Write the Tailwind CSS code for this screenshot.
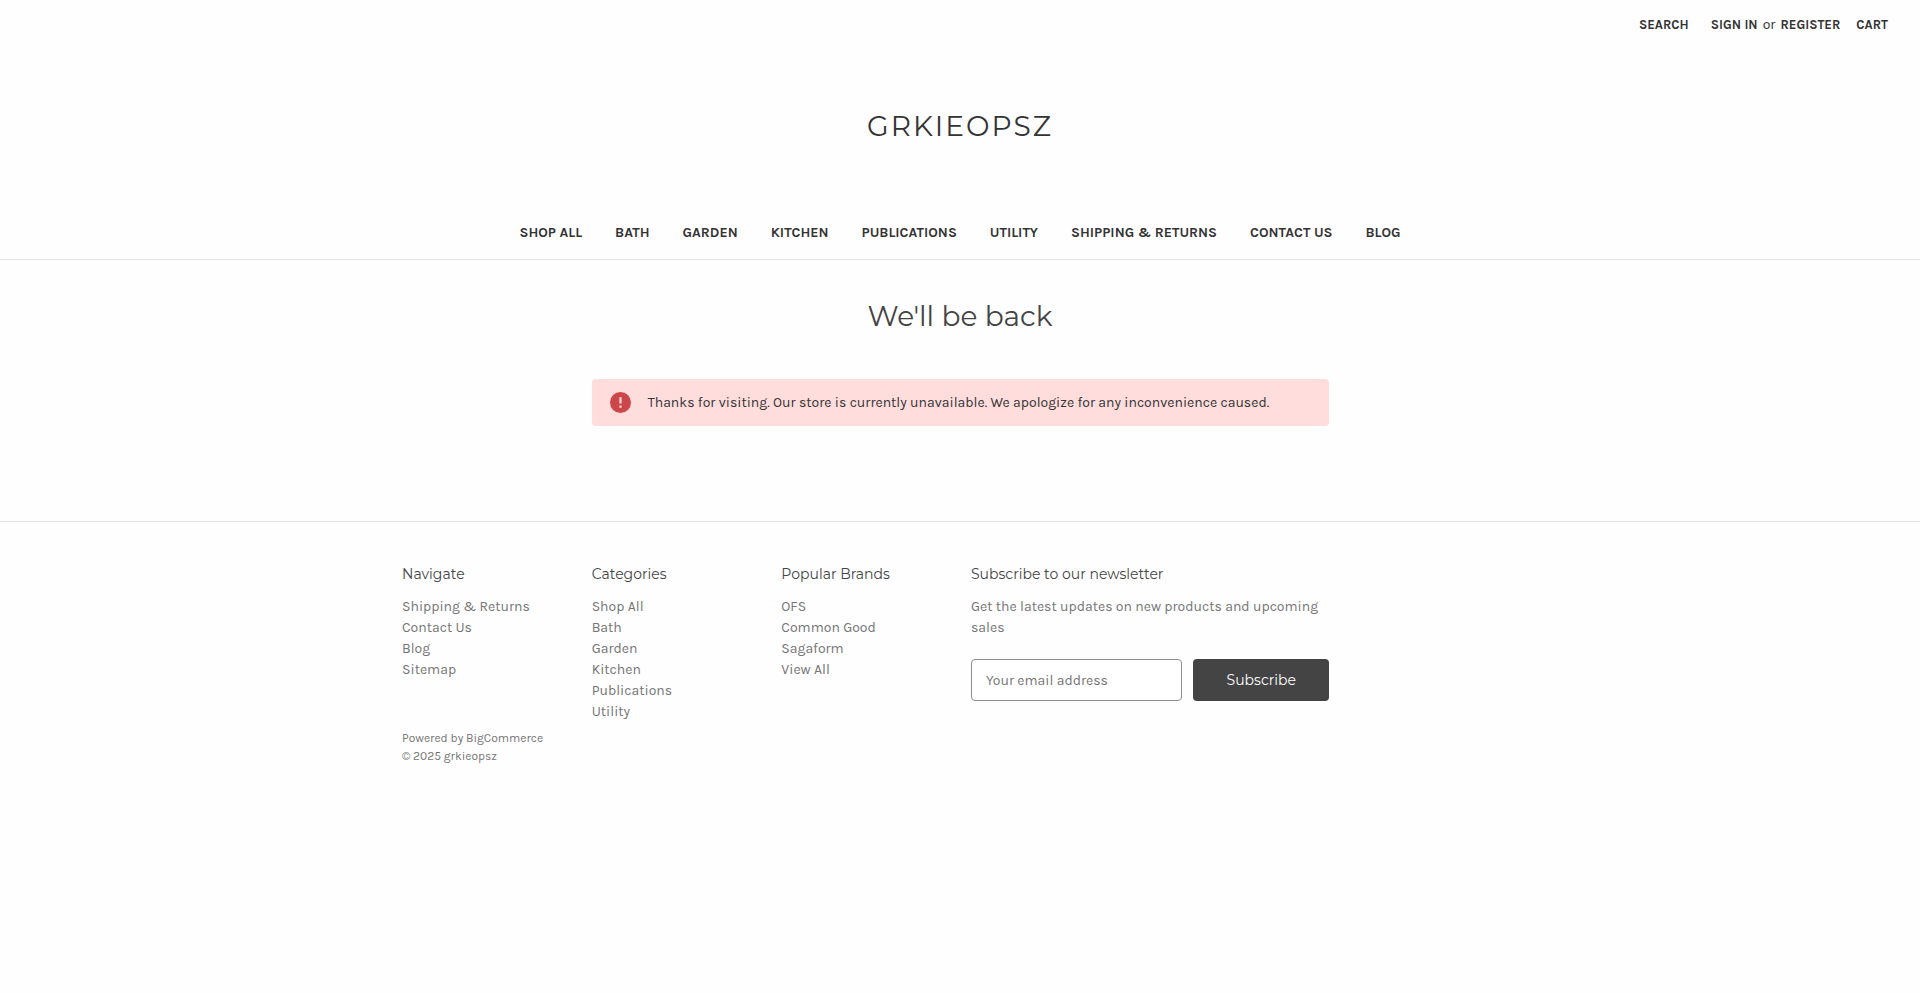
<!DOCTYPE html>
<html lang="en">
<head>
    <meta charset="UTF-8">
    <meta name="viewport" content="width=device-width, initial-scale=1.0">
    <title>grkieopsz - Maintenance</title>

    <script src="https://cdn.jsdelivr.net/npm/@tailwindcss/browser@4"></script>
</head>
<body class="bg-[#fefefe] font-[Karla,Roboto,sans-serif] text-sm leading-[21px] text-[#333]">

    <header class="border-b border-[#e5e5e5]">
        <nav class="flex justify-end px-8 pt-3.5 text-[13px] leading-[21px] font-bold" aria-label="Account">
            <button type="button" class="mr-[22px]">SEARCH</button>
            <div class="mr-4 flex gap-[5px]">
                <a href="#">SIGN IN</a>
                <span class="text-sm leading-[21px] font-normal">or</span>
                <a href="#">REGISTER</a>
            </div>
            <a href="#">CART</a>
        </nav>

        <div class="pt-[70px] text-center font-[Montserrat,Inter,sans-serif] text-[28px] leading-[42px] tracking-[2px]">
            <a href="#">GRKIEOPSZ</a>
        </div>

        <nav class="flex flex-wrap justify-center gap-x-[33px] pt-[75px] pb-4 font-bold" aria-label="Main">
            <a href="#">SHOP ALL</a>
            <a href="#">BATH</a>
            <a href="#">GARDEN</a>
            <a href="#">KITCHEN</a>
            <a href="#">PUBLICATIONS</a>
            <a href="#">UTILITY</a>
            <a href="#">SHIPPING &amp; RETURNS</a>
            <a href="#">CONTACT US</a>
            <a href="#">BLOG</a>
        </nav>
    </header>

    <main class="mx-auto max-w-[1138px] pt-[35px] pb-[95px]">
        <h1 class="text-center font-[Montserrat,Inter,sans-serif] text-[28px] leading-[42px] text-[#444]">We'll be back</h1>

        <div class="mx-auto mt-[42px] w-2/3 pr-[10px] pl-[11px]">
            <div class="flex items-center rounded bg-[#ffdddd] px-[18px] py-[13px]" role="alert">
                <svg class="mr-[17px] size-[21px] shrink-0" viewBox="0 0 21 21" aria-hidden="true">
                    <circle cx="10.5" cy="10.5" r="10.5" fill="#cc4749"/>
                    <path d="M9.4 5.2h2.2v6.3H9.4zM9.4 13.6h2.2v2.1H9.4z" fill="#ffdddd"/>
                </svg>
                <span>Thanks for visiting. Our store is currently unavailable. We apologize for any inconvenience caused.</span>
            </div>
        </div>
    </main>

    <footer class="border-t border-[#e5e5e5] pt-[42px] text-[#757575]">
        <div class="mx-auto max-w-[1138px]">
            <div class="grid grid-cols-6">
                <section class="pr-[10px] pl-[11px]">
                    <h2 class="mb-[11px] font-[Montserrat,Inter,sans-serif] text-[#444]">Navigate</h2>
                    <ul>
                        <li><a href="#">Shipping &amp; Returns</a></li>
                        <li><a href="#">Contact Us</a></li>
                        <li><a href="#">Blog</a></li>
                        <li><a href="#">Sitemap</a></li>
                    </ul>
                </section>
                <section class="pr-[10px] pl-[11px]">
                    <h2 class="mb-[11px] font-[Montserrat,Inter,sans-serif] text-[#444]">Categories</h2>
                    <ul>
                        <li><a href="#">Shop All</a></li>
                        <li><a href="#">Bath</a></li>
                        <li><a href="#">Garden</a></li>
                        <li><a href="#">Kitchen</a></li>
                        <li><a href="#">Publications</a></li>
                        <li><a href="#">Utility</a></li>
                    </ul>
                </section>
                <section class="pr-[10px] pl-[11px]">
                    <h2 class="mb-[11px] font-[Montserrat,Inter,sans-serif] text-[#444]">Popular Brands</h2>
                    <ul>
                        <li><a href="#">OFS</a></li>
                        <li><a href="#">Common Good</a></li>
                        <li><a href="#">Sagaform</a></li>
                        <li><a href="#">View All</a></li>
                    </ul>
                </section>
                <section class="col-span-2 pr-[10px] pl-[11px]">
                    <h2 id="nl_title" class="mb-[11px] font-[Montserrat,Inter,sans-serif] text-[#444]">Subscribe to our newsletter</h2>
                    <p><label for="nl_email">Get the latest updates on new products and upcoming sales</label></p>
                    <form class="mt-[21px] flex gap-[11px]" aria-labelledby="nl_title">
                        <input id="nl_email" type="email" placeholder="Your email address" class="h-[42px] min-w-0 flex-1 rounded border border-[#8f8f8f] bg-white px-3.5 placeholder:text-[#757575]">
                        <button type="submit" class="h-[42px] w-[136px] rounded bg-[#444] font-[Montserrat,Inter,sans-serif] text-white">Subscribe</button>
                    </form>
                </section>
            </div>

            <div class="mt-[7px] pr-[10px] pl-[11px] text-xs leading-[18px]">
                <p>Powered by <a href="#">BigCommerce</a></p>
                <p>&copy; 2025 grkieopsz</p>
            </div>
        </div>
    </footer>

</body>
</html>
